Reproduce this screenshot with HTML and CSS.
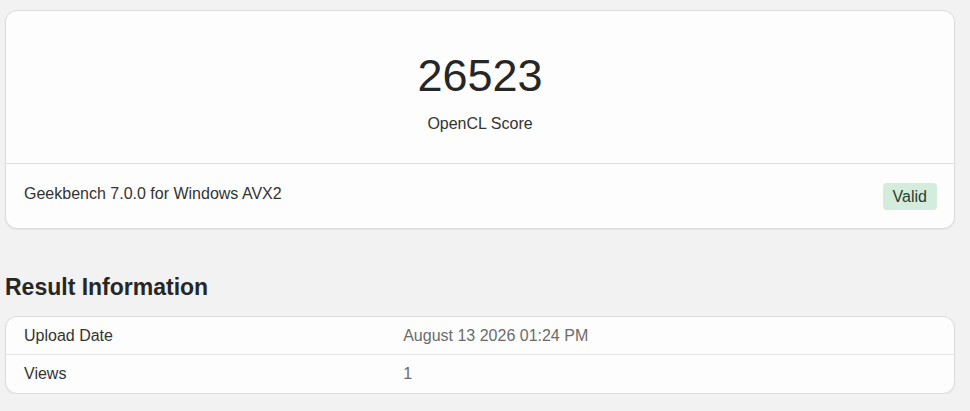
FILE: index.html
```html
<!DOCTYPE html>
<html lang="en">
<head>
<meta charset="utf-8">
<title>Geekbench OpenCL Score</title>
<link rel="stylesheet" href="styles.css">
</head>
<body>
<div class="page">
  <section class="card score-card">
    <div class="score-top">
      <div class="score">26523</div>
      <div class="score-label">OpenCL Score</div>
    </div>
    <div class="score-footer">
      <div class="version">Geekbench 7.0.0 for Windows AVX2</div>
      <span class="badge">Valid</span>
    </div>
  </section>

  <h2 class="section-title">Result Information</h2>
  <section class="card info-card">
    <div class="info-row">
      <div class="info-name">Upload Date</div>
      <div class="info-value">August 13 2026 01:24 PM</div>
    </div>
    <div class="info-row">
      <div class="info-name">Views</div>
      <div class="info-value">1</div>
    </div>
  </section>
</div>
</body>
</html>
```

FILE: styles.css
```css
html, body {
  margin: 0;
  padding: 0;
  background: #f2f2f2;
}
body {
  font-family: "Liberation Sans", Arial, Helvetica, sans-serif;
  color: #333;
}
.page {
  padding: 10px 15px 0 5px;
}
.card {
  background: #fdfdfd;
  border: 1px solid #dcdcdc;
  border-radius: 12px;
  box-shadow: 0 1px 2px rgba(0, 0, 0, 0.06);
  overflow: hidden;
}
.score-top {
  padding: 38px 18px 27px;
  text-align: center;
  border-bottom: 1px solid #e0e0e0;
}
.score {
  font-size: 45px;
  line-height: 54px;
  color: #262626;
}
.score-label {
  margin-top: 9px;
  font-size: 16px;
  line-height: 24px;
  color: #333;
}
.score-footer {
  display: flex;
  justify-content: space-between;
  align-items: flex-start;
  padding: 19px 17px 18px 18px;
}
.version {
  font-size: 16px;
  line-height: 21px;
  color: #333;
}
.badge {
  background: #d4ecdb;
  color: #2c3a31;
  font-size: 16px;
  line-height: 21px;
  padding: 3px 10px;
  border-radius: 4px;
}
.section-title {
  margin: 44px 0 15px;
  font-size: 23px;
  line-height: 28px;
  font-weight: bold;
  color: #262626;
}
.info-row {
  display: grid;
  grid-template-columns: 40% 60%;
  font-size: 16px;
  line-height: 23px;
}
.info-row + .info-row {
  border-top: 1px solid #e3e3e3;
}
.info-row + .info-row .info-name,
.info-row + .info-row .info-value {
  padding-bottom: 8px;
}
.info-name,
.info-value {
  padding: 7px 18px;
}
.info-name {
  color: #333;
}
.info-value {
  color: #6b6b6b;
}
```
